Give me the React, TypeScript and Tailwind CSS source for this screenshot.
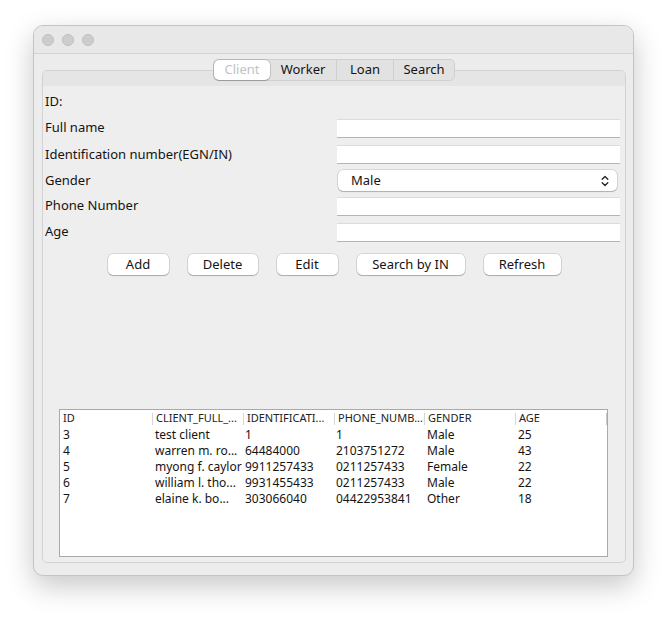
import { useState } from "react";

interface IClient {
  id: number;
  name: string;
  in: string;
  phone: string;
  gender: string;
  age: number;
}

const clients: IClient[] = [
  { id: 3, name: "test client", in: "1", phone: "1", gender: "Male", age: 25 },
  { id: 4, name: "warren m. ro...", in: "64484000", phone: "2103751272", gender: "Male", age: 43 },
  { id: 5, name: "myong f. caylor", in: "9911257433", phone: "0211257433", gender: "Female", age: 22 },
  { id: 6, name: "william l. tho...", in: "9931455433", phone: "0211257433", gender: "Male", age: 22 },
  { id: 7, name: "elaine k. bo...", in: "303066040", phone: "04422953841", gender: "Other", age: 18 },
];

const headers = ["ID", "CLIENT_FULL_...", "IDENTIFICATI...", "PHONE_NUMB...", "GENDER", "AGE"];
const colW = ["w-[92px]", "w-[91px]", "w-[91px]", "w-[90px]", "w-[91px]", "w-[91px]"];

const tabs = [
  { name: "Client", w: "w-[56px]" },
  { name: "Worker", w: "w-[66px]" },
  { name: "Loan", w: "w-[57px]" },
  { name: "Search", w: "w-[61px]" },
];

const buttons = [
  { name: "Add", w: "w-[61px]" },
  { name: "Delete", w: "w-[70px]" },
  { name: "Edit", w: "w-[61px]" },
  { name: "Search by IN", w: "w-[108px]" },
  { name: "Refresh", w: "w-[77px]" },
];

function TextField() {
  return <div className="h-[19px] w-[283px] bg-white border-t border-t-[#dcdcdc] border-b border-b-[#b4b4b4]"></div>;
}

export default function App() {
  const [tab, setTab] = useState("Client");

  return (
    <div className="w-[668px] h-[618px] bg-white pt-[25px] pl-[33px] text-[#141414] font-['Noto_Sans','Liberation_Sans',sans-serif]">
      <div className="w-[601px] h-[551px] rounded-[10px] border border-[#c4c4c4] bg-[#ececec] shadow-[0_10px_28px_rgba(0,0,0,0.22)] flex flex-col overflow-hidden">
        {/* title bar */}
        <div className="h-[28px] shrink-0 border-b border-[#d4d4d4] bg-[#e8e8e8] flex items-center gap-[8px] pl-[8px]">
          <span className="w-[12px] h-[12px] rounded-full bg-[#cdcdcd] border border-[#bfbfbf]"></span>
          <span className="w-[12px] h-[12px] rounded-full bg-[#cdcdcd] border border-[#bfbfbf]"></span>
          <span className="w-[12px] h-[12px] rounded-full bg-[#cdcdcd] border border-[#bfbfbf]"></span>
        </div>

        <div className="flex flex-col px-[8px] pt-[5px]">
          {/* tabs */}
          <div className="relative z-10 flex justify-center mb-[-11px] pl-[1px]">
            <div className="flex h-[22px] rounded-[5px] border border-[#d0d0d0] bg-[#e2e2e2] text-[13px]">
              {tabs.map((t, i) => (
                <button
                  key={t.name}
                  onClick={() => setTab(t.name)}
                  className={
                    t.name === tab
                      ? `${t.w} h-full rounded-[5px] bg-white text-[#c2c2c2] shadow-[0_0_0_0.5px_rgba(0,0,0,0.25),0_1px_1px_rgba(0,0,0,0.15)] flex items-center justify-center`
                      : `${t.w} h-full flex items-center justify-center text-[#141414] ${i > 1 ? "border-l border-[#d0d0d0]" : ""}`
                  }
                >
                  {t.name}
                </button>
              ))}
            </div>
          </div>

          {/* tab panel */}
          <div className="h-[493px] w-[584px] rounded-[5px] border border-[#d2d2d2] bg-[#eeeeee] flex flex-col overflow-hidden">
            <div className="h-[15px] shrink-0 bg-[#e5e5e5]"></div>
            <div className="flex flex-col pt-[3px] pl-[2px] pr-[5px] text-[13px]">
              <div className="h-[26px] flex items-center">ID:</div>
              <div className="h-[26px] flex items-center justify-between">
                <span>Full name</span>
                <TextField />
              </div>
              <div className="h-[27px] flex items-center justify-between">
                <span>Identification number(EGN/IN)</span>
                <TextField />
              </div>
              <div className="h-[25px] flex items-center justify-between">
                <span>Gender</span>
                <div className="h-[21px] w-[279px] mr-[3px] rounded-[5px] bg-white shadow-[0_0_0_0.5px_rgba(0,0,0,0.2),0_1px_1px_rgba(0,0,0,0.18)] flex items-center justify-between pl-[13px] pr-[8px]">
                  <span>Male</span>
                  <svg width="8" height="12" viewBox="0 0 8 12" fill="none" stroke="#2a2a2a" strokeWidth="1.4" strokeLinecap="round" strokeLinejoin="round">
                    <path d="M1.2 4.2 L4 1.4 L6.8 4.2" />
                    <path d="M1.2 7.8 L4 10.6 L6.8 7.8" />
                  </svg>
                </div>
              </div>
              <div className="h-[26px] flex items-center justify-between">
                <span>Phone Number</span>
                <TextField />
              </div>
              <div className="h-[26px] flex items-center justify-between">
                <span>Age</span>
                <TextField />
              </div>
            </div>

            {/* buttons */}
            <div className="mt-[9px] flex justify-center gap-[19px] text-[13px]">
              {buttons.map((b) => (
                <button
                  key={b.name}
                  className={`${b.w} h-[21px] rounded-[5px] bg-white shadow-[0_0_0_0.5px_rgba(0,0,0,0.2),0_1px_1px_rgba(0,0,0,0.2)] flex items-center justify-center`}
                >
                  {b.name}
                </button>
              ))}
            </div>

            {/* table */}
            <div className="mt-[134px] ml-[16px] w-[549px] h-[148px] bg-white border border-[#a9a9a9] flex flex-col">
              <div className="h-[17px] flex text-[11px] text-[#222]">
                {headers.map((h, i) => (
                  <div key={h} className={`${colW[i]} h-full flex items-center`}>
                    {i > 0 && <span className="h-[12px] border-l border-[#d6d6d6]"></span>}
                    <span className="pl-[3px]">{h}</span>
                  </div>
                ))}
                <span className="h-[12px] mt-[3px] border-l border-[#c8c8c8]"></span>
              </div>
              {clients.map((c) => (
                <div key={c.id} className="h-[16px] flex text-[12px] leading-none">
                  <div className={`${colW[0]} flex items-center pl-[3px]`}>{c.id}</div>
                  <div className={`${colW[1]} flex items-center pl-[3px] whitespace-nowrap`}>{c.name}</div>
                  <div className={`${colW[2]} flex items-center pl-[2px]`}>{c.in}</div>
                  <div className={`${colW[3]} flex items-center pl-[2px]`}>{c.phone}</div>
                  <div className={`${colW[4]} flex items-center pl-[3px]`}>{c.gender}</div>
                  <div className={`${colW[5]} flex items-center pl-[3px]`}>{c.age}</div>
                </div>
              ))}
            </div>
          </div>
        </div>
      </div>
    </div>
  );
}
